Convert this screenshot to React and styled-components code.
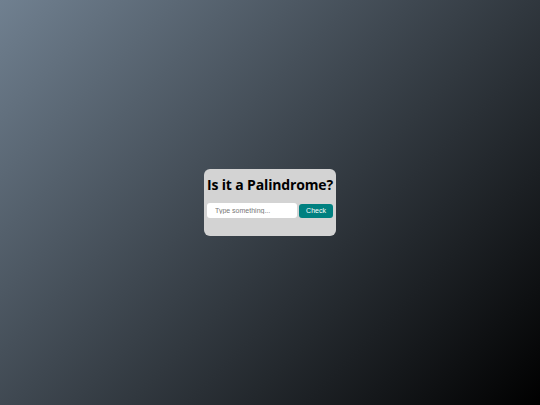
import React, { useState } from "react";
import styled, { createGlobalStyle } from "styled-components";

const Global = createGlobalStyle`
  html, body { margin: 0; padding: 0; height: 100%; }
  body { font-family: "Open Sans", sans-serif; }
  #root { height: 100%; }
`;

const Page = styled.div`
  width: 540px;
  height: 405px;
  background: linear-gradient(135deg, #708090 0%, #000000 100%);
  display: flex;
  align-items: center;
  justify-content: center;
`;

const Card = styled.div`
  width: 132px;
  height: 67px;
  box-sizing: border-box;
  background: #d3d3d3;
  border-radius: 6px;
  display: flex;
  flex-direction: column;
  align-items: center;
  padding-top: 7px;
`;

const Title = styled.h1`
  margin: 0 0 9px;
  font-family: "Open Sans", sans-serif;
  font-weight: 700;
  font-size: 14px;
  line-height: 18px;
  letter-spacing: -0.15px;
  color: #000;
  white-space: nowrap;
`;

const Row = styled.div`
  display: flex;
  gap: 2px;
  align-items: center;
`;

const Input = styled.input`
  width: 90px;
  height: 15px;
  box-sizing: border-box;
  border: none;
  border-radius: 3px;
  background: #fff;
  padding: 0 8px;
  font-family: "Liberation Sans", Arial, sans-serif;
  font-size: 7px;
  outline: none;
  &::placeholder { color: #777; }
`;

const Button = styled.button`
  width: 34px;
  height: 14px;
  border: none;
  border-radius: 3px;
  background: #008080;
  color: #fff;
  font-family: "Liberation Sans", Arial, sans-serif;
  font-size: 7px;
  padding: 0;
  cursor: pointer;
`;

export default function App() {
  const [text, setText] = useState("");
  return (
    <Page>
      <Global />
      <Card>
        <Title>Is it a Palindrome?</Title>
        <Row>
          <Input placeholder="Type something..." value={text} onChange={(e) => setText(e.target.value)} />
          <Button>Check</Button>
        </Row>
      </Card>
    </Page>
  );
}
